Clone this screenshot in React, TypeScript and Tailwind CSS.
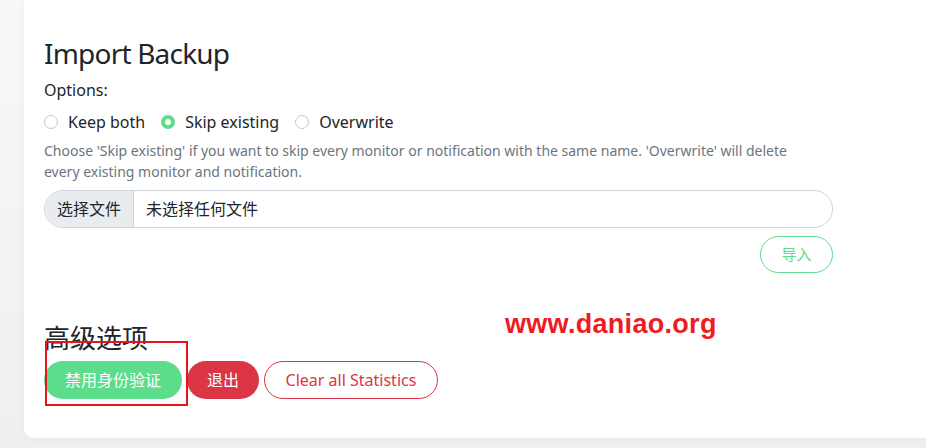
import React from "react"

const font = { fontFamily: '"Noto Sans", "Noto Sans CJK SC", sans-serif' }

function Radio({ label, checked }: { label: string; checked?: boolean }) {
  return (
    <label className="flex items-center gap-[10px] mr-4">
      {checked ? (
        <span className="w-[14px] h-[14px] rounded-full bg-[#5cdd8b] flex items-center justify-center">
          <span className="w-[6px] h-[6px] rounded-full bg-white" />
        </span>
      ) : (
        <span className="w-[14px] h-[14px] rounded-full border border-[#c7c7c7] bg-white" />
      )}
      <span>{label}</span>
    </label>
  )
}

export default function App() {
  return (
    <div className="h-[448px] w-[926px] overflow-hidden bg-gradient-to-b from-[#f8f8f8] to-[#efefef] pl-6 pb-[10px]" style={font}>
      <div className="relative h-full bg-white rounded-bl-[10px] shadow-[0_0_12px_rgba(0,0,0,0.04)] pl-5 pt-[33px] text-[#212529]">
        <h2 className="text-[28px] leading-[40px] tracking-[-0.8px]">Import Backup</h2>
        <div className="mt-[5px] text-[16px] leading-6">Options:</div>
        <div className="mt-[8px] flex items-center text-[16px] leading-6">
          <Radio label="Keep both" />
          <Radio label="Skip existing" checked />
          <Radio label="Overwrite" />
        </div>
        <p className="mt-[6px] w-[770px] text-[14px] leading-[21px] text-[#6c757d]">
          Choose 'Skip existing' if you want to skip every monitor or notification with the same name. 'Overwrite' will delete
          every existing monitor and notification.
        </p>
        <div className="mt-[8px] w-[789px] h-[38px] flex rounded-full border border-[#ced4da] overflow-hidden text-[16px]">
          <div className="w-[89px] bg-[#e9ecef] border-r border-[#ced4da] flex items-center justify-center">选择文件</div>
          <div className="flex items-center pl-3">未选择任何文件</div>
        </div>
        <div className="w-[789px] flex justify-end mt-[8px]">
          <button className="w-[73px] h-[37px] rounded-full border border-[#5cdd8b] text-[#5cdd8b] text-[15px]">导入</button>
        </div>
        <h3 className="mt-[48px] text-[26px] leading-[34px]">高级选项</h3>
        <div className="mt-[6px] flex items-center gap-[5px] text-[16px]">
          <button className="w-[138px] h-[38px] rounded-full bg-[#5cdd8b] text-white">禁用身份验证</button>
          <button className="w-[72px] h-[38px] rounded-full bg-[#dc3545] text-white">退出</button>
          <button className="w-[174px] h-[38px] rounded-full border border-[#dc3545] text-[#dc3545]">Clear all Statistics</button>
        </div>
        <div className="absolute left-[21px] top-[341px] w-[143px] h-[65px] border-2 border-[#e8141c] pointer-events-none" />
        <div className="absolute left-[481px] top-[304px] text-[27px] font-bold text-[#ed1c24] tracking-[0.3px]" style={{ fontFamily: '"Liberation Sans", sans-serif' }}>
          www.daniao.org
        </div>
      </div>
    </div>
  )
}
